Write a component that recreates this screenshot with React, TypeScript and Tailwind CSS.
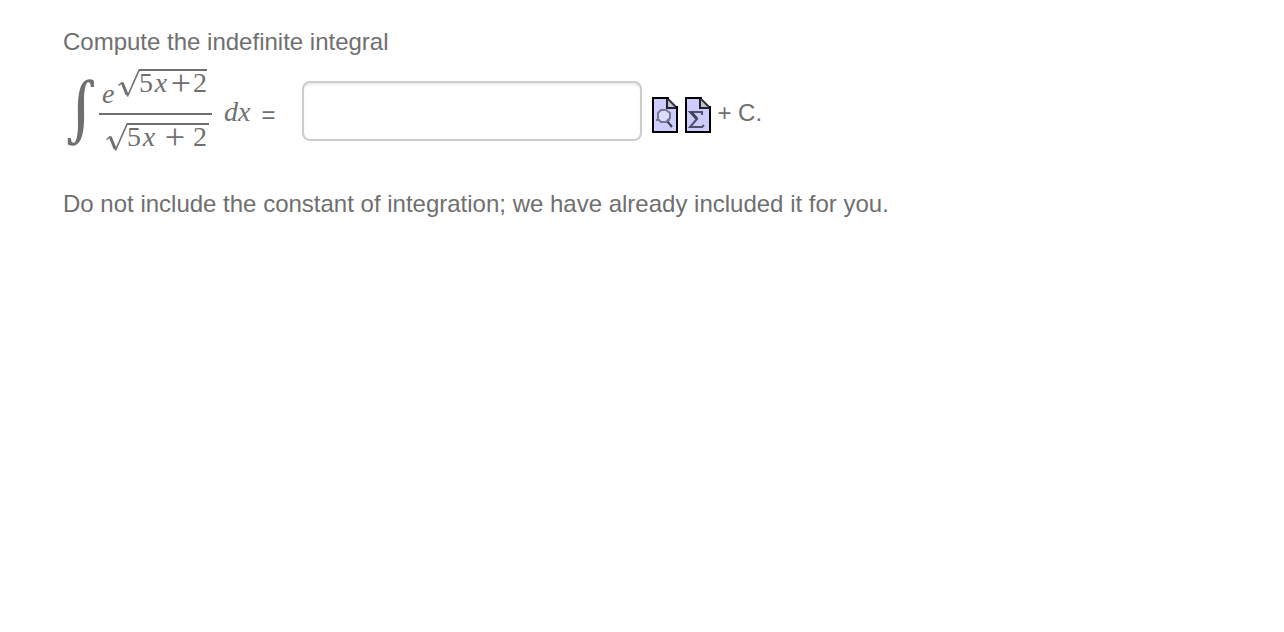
import type { ReactNode } from 'react';

function Sqrt({ children }: { children: ReactNode }) {
  return (
    <span className="flex items-start">
      <svg width="22" height="30" viewBox="0 0 22 30" fill="none" stroke="currentColor" className="-mr-px shrink-0">
        <path d="M0.5 17.5L4.5 14.3" strokeWidth="1.4" />
        <path d="M4.2 14.8L9.2 27" strokeWidth="3" />
        <path d="M9.4 28.5L21.3 1.5" strokeWidth="1.6" />
      </svg>
      <span className="mt-px flex h-7 items-start border-t-2 border-current leading-6">{children}</span>
    </span>
  );
}

function PageIcon({ children }: { children: ReactNode }) {
  return (
    <svg width="26" height="36" viewBox="0 0 26 36" fill="none" aria-hidden="true">
      <path d="M1 1H16L25 10V35H1Z" fill="#ccccff" />
      <path d="M15 1V11H25" fill="#c3c3d6" stroke="#22222a" strokeWidth="2" />
      <path d="M15 1L25 11" stroke="#33333d" strokeWidth="2" />
      <path d="M1 1H16M25 10V35H1V1" stroke="#000" strokeWidth="2" strokeLinecap="square" />
      {children}
    </svg>
  );
}

export default function App() {
  return (
    <main className="bg-white px-[63px] pt-7 font-['Liberation_Sans',Arial,sans-serif] text-2xl leading-7 text-[#6f6f6f]">
      <p>Compute the indefinite integral</p>

      <div className="mt-[10px] flex items-center">
        {/* integral of e^sqrt(5x+2) / sqrt(5x+2) */}
        <div className="flex items-center font-['Liberation_Serif',serif] text-[28px]">
          <span className="w-9 font-['DejaVu_Math_TeX_Gyre','Liberation_Serif',serif] text-[60px] leading-[68px]">∫</span>
          <div className="w-[113px]">
            <div className="flex h-[49px] items-start border-b-2 border-current pl-[3px] pt-[2px]">
              <i className="mt-3 w-4">e</i>
              <Sqrt>
                <span>5</span>
                <i className="w-4 text-center">x</i>
                <span className="w-6 text-center text-4xl leading-6">+</span>
                <span>2</span>
              </Sqrt>
            </div>
            <div className="flex h-[41px] items-start pl-[7px] pt-[7px]">
              <Sqrt>
                <span>5</span>
                <i className="w-4 text-center">x</i>
                <span className="w-9 text-center text-4xl leading-6">+</span>
                <span className="pr-[2px]">2</span>
              </Sqrt>
            </div>
          </div>
          <i className="ml-3 mt-[2px]">dx</i>
        </div>
        <label htmlFor="answer" className="ml-[11px] mt-2 w-[41px]">=</label>
        <input
          id="answer"
          type="text"
          className="h-[60px] w-[340px] rounded-lg border-2 border-[#cccccc] bg-white px-3 shadow-[inset_0_2px_2px_rgba(0,0,0,0.07)]"
        />
        <div className="ml-[10px] mt-2 flex gap-[7px]">
          <button type="button" aria-label="Preview">
            <PageIcon>
              <path d="M15 24L20 30" stroke="#3c3c4c" strokeWidth="2" />
              <path d="M9 13H14L18 16V21L14 25H9L6 22V16Z" fill="#dcdcff" stroke="#777790" strokeWidth="2" />
              <path d="M4 23H7M16 23H18" stroke="#777790" strokeWidth="2" />
            </PageIcon>
          </button>
          <button type="button" aria-label="Equation editor">
            <PageIcon>
              <path d="M17 18V15H5L12 22L5 30H17L19 28" stroke="#50506a" strokeWidth="2" />
              <path d="M6 15L12 22" stroke="#444458" strokeWidth="3" />
            </PageIcon>
          </button>
        </div>
        <span className="ml-[6px] mt-1">+ C.</span>
      </div>

      <p className="mt-[34px]">Do not include the constant of integration; we have already included it for you.</p>
    </main>
  );
}
